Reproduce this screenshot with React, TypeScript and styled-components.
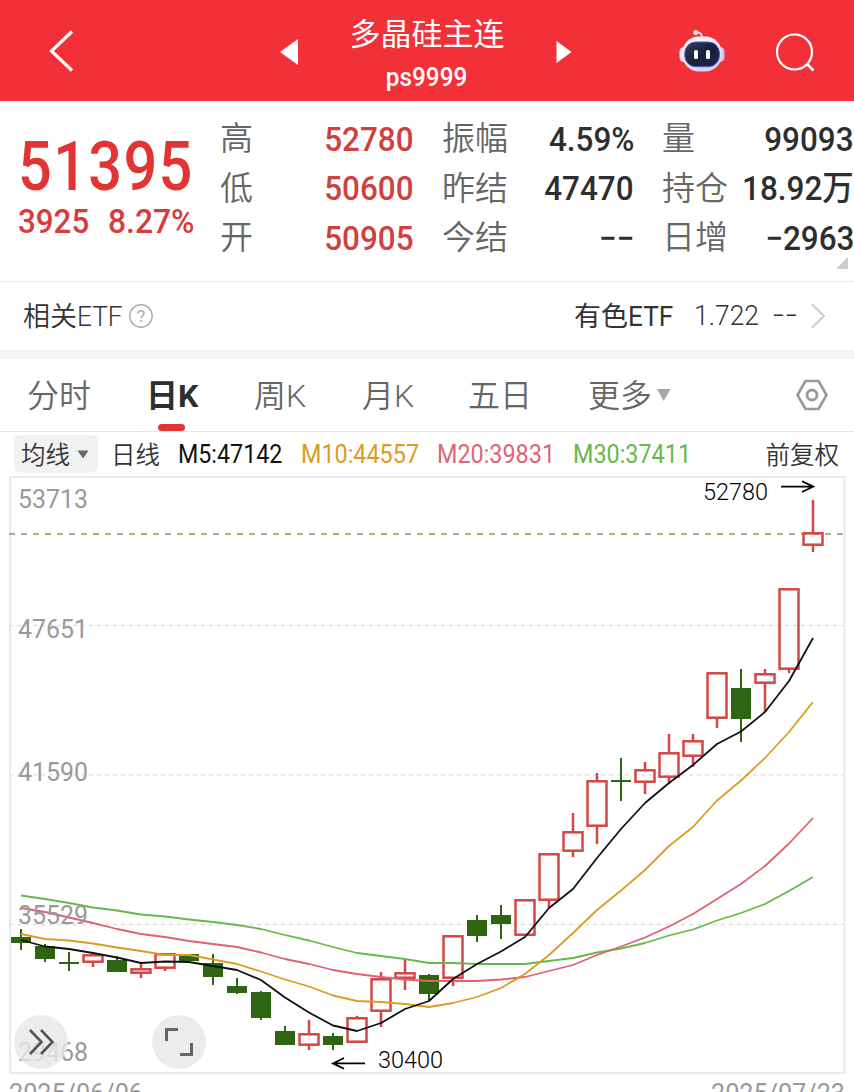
import React from "react";
import styled, { createGlobalStyle } from "styled-components";

const GlobalStyle = createGlobalStyle`
  * { box-sizing: border-box; }
  html, body { margin: 0; padding: 0; background: #fff; overflow: hidden; }
  body { font-family: Roboto, "Noto Sans CJK SC", sans-serif; color: #333; }
`;

const Screen = styled.main`
  width: 854px;
  height: 1092px;
  overflow: hidden;
  display: flex;
  flex-direction: column;
  background: #fff;
`;

/* Digits are set narrower than the family's default width. */
const Num = styled.span<{ $scale?: number; $origin?: string; $track?: number }>`
  display: inline-block;
  white-space: nowrap;
  letter-spacing: ${(p) => p.$track ?? 0}px;
  transform: scaleX(${(p) => p.$scale ?? 0.935});
  transform-origin: ${(p) => p.$origin ?? "left"} center;
`;

const Header = styled.header`
  height: 101px;
  flex: none;
  display: grid;
  grid-template-columns: 278px 401px 97px 78px;
  align-items: center;
  background: #f23038;
  color: #fff;
`;

const BackButton = styled.div`
  padding-left: 48px;
  line-height: 0;
`;

const TitleGroup = styled.div`
  width: 298px;
  display: grid;
  grid-template-columns: 22px 1fr 23px;
  align-items: center;
  padding: 3px 0 0 1px;
  svg { display: block; }
`;

const Titles = styled.div`
  display: flex;
  flex-direction: column;
  align-items: center;
  padding-top: 9px;
`;

const Title = styled.div`
  font-size: 31px;
  line-height: 42px;
  height: 42px;
  white-space: nowrap;
`;

const Code = styled.div`
  font-size: 26px;
  line-height: 42px;
  height: 44px;
  font-weight: 500;
`;

const IconSlot = styled.div<{ $top?: number }>`
  padding-top: ${(p) => p.$top ?? 0}px;
  line-height: 0;
`;

const Quote = styled.section`
  position: relative;
  height: 181px;
  flex: none;
  display: grid;
  grid-template-columns: 220px 194px 28px 192px 28px 192px;
  border-bottom: 1px solid #ebebeb;
`;

const Price = styled.div`
  padding: 29px 0 0 18px;
  color: #e33434;
`;

const Last = styled.div`
  font-size: 68px;
  line-height: 74px;
  height: 73px;
  font-weight: 500;
`;

const Change = styled.div`
  display: grid;
  grid-template-columns: 90px 1fr;
  font-size: 33.5px;
  line-height: 38px;
  font-weight: 500;
  color: #d63c3c;
`;

const Stats = styled.dl`
  margin: 0;
  padding-top: 13px;
  display: grid;
  grid-template-rows: repeat(3, 49.5px);
`;

const Stat = styled.div`
  display: flex;
  justify-content: space-between;
  align-items: center;
  white-space: nowrap;
`;

const StatLabel = styled.dt`
  font-size: 33px;
  line-height: 49px;
  color: #666;
  font-weight: 350;
`;

const StatValue = styled.dd<{ $up?: boolean }>`
  margin: 0;
  font-size: 34px;
  line-height: 50px;
  font-weight: 500;
  color: ${(p) => (p.$up ? "#cf4040" : "#2e2e2e")};
`;

const Corner = styled.svg`
  position: absolute;
  right: 6px;
  bottom: 12px;
`;

const Related = styled.section`
  height: 77px;
  flex: none;
  display: flex;
  align-items: center;
  padding: 0 28px 0 23px;
  border-bottom: 9px solid #f4f4f4;
  font-size: 27px;
  color: #333;
  white-space: nowrap;
  svg { display: block; flex: none; }
`;

const RelatedLabel = styled.div`
  width: 106px;
  padding-bottom: 3px;
  font-weight: 350;
`;

const RelatedName = styled.div`
  margin-left: auto;
  width: 120px;
  padding-bottom: 3px;
`;

const RelatedPrice = styled.div`
  width: 78px;
  font-weight: 350;
`;

const RelatedChange = styled.div`
  width: 38px;
  font-weight: 350;
`;

const Tabs = styled.nav`
  height: 73px;
  flex: none;
  display: grid;
  grid-template-columns: 119px 108px 108px 106px 120px 208px 1fr;
  padding-left: 27px;
  border-bottom: 1px solid #e6e6e6;
`;

const Tab = styled.div<{ $active?: boolean }>`
  position: relative;
  display: flex;
  align-items: center;
  padding-bottom: 4px;
  font-size: 32px;
  font-weight: ${(p) => (p.$active ? 700 : 350)};
  color: ${(p) => (p.$active ? "#2e2e2e" : "#666")};
  white-space: nowrap;
`;

const MoreArrow = styled.svg`
  margin: 3px 0 0 3px;
`;

const SettingsTab = styled(Tab)`
  padding-bottom: 0;
`;

const Underline = styled.span`
  position: absolute;
  left: 12px;
  bottom: 0;
  width: 27px;
  height: 7px;
  border-radius: 3.5px;
  background: #e33434;
`;

const Legend = styled.section`
  height: 44px;
  flex: none;
  display: grid;
  grid-template-columns: 84px 13px 67px 123px 136px 136px 1fr auto;
  align-items: center;
  padding: 0 15px 0 14px;
  font-size: 24.5px;
  font-weight: 350;
  white-space: nowrap;
`;

const LegendLabel = styled.span`
  padding-bottom: 2px;
`;

const Picker = styled.div`
  height: 38px;
  border-radius: 6px;
  background: #f2f2f2;
  display: flex;
  align-items: center;
  gap: 7px;
  padding-left: 7px;
`;

const Average = styled.div<{ $color: string }>`
  font-size: 25px;
  font-weight: 450;
  color: ${(p) => p.$color};
`;

const ChartArea = styled.section`
  position: relative;
  height: 616px;
  flex: none;
  svg { display: block; }
`;

const RoundButton = styled.div<{ $left: number }>`
  position: absolute;
  left: ${(p) => p.$left}px;
  top: 539px;
  width: 54px;
  height: 54px;
  border-radius: 50%;
  background: rgba(232, 232, 232, 0.82);
  display: flex;
  align-items: center;
  justify-content: center;
`;

type Row = { label: string; value: string; up?: boolean };

const columns: Row[][] = [
  [
    { label: "高", value: "52780", up: true },
    { label: "低", value: "50600", up: true },
    { label: "开", value: "50905", up: true },
  ],
  [
    { label: "振幅", value: "4.59%" },
    { label: "昨结", value: "47470" },
    { label: "今结", value: "−−" },
  ],
  [
    { label: "量", value: "99093" },
    { label: "持仓", value: "18.92万" },
    { label: "日增", value: "−2963" },
  ],
];

/* [kind, body top, body bottom, wick top, wick bottom] */
type Candle = ["u" | "d" | "x", number, number, number, number];
const candles: Candle[] = [
  ["d", 937, 943, 929, 950],
  ["d", 946, 959, 944, 962],
  ["x", 962, 964, 952, 971],
  ["u", 954, 963, 954, 967],
  ["d", 960, 972, 956, 972],
  ["u", 968, 974, 963, 978],
  ["u", 953, 969, 953, 971],
  ["d", 954, 961, 954, 963],
  ["d", 963, 977, 954, 985],
  ["d", 986, 993, 978, 994],
  ["d", 992, 1018, 991, 1020],
  ["d", 1031, 1045, 1026, 1045],
  ["u", 1033, 1046, 1020, 1050],
  ["d", 1036, 1045, 1033, 1050],
  ["u", 1017, 1043, 1016, 1043],
  ["u", 978, 1012, 972, 1027],
  ["u", 972, 979, 960, 990],
  ["d", 975, 994, 974, 1001],
  ["u", 935, 979, 935, 986],
  ["d", 920, 936, 915, 942],
  ["d", 915, 924, 905, 939],
  ["u", 899, 936, 899, 936],
  ["u", 853, 901, 853, 908],
  ["u", 831, 852, 813, 857],
  ["u", 780, 827, 773, 844],
  ["x", 780, 782, 758, 801],
  ["u", 769, 783, 762, 794],
  ["u", 752, 778, 734, 784],
  ["u", 740, 757, 734, 767],
  ["u", 672, 719, 672, 728],
  ["d", 688, 719, 669, 742],
  ["u", 673, 684, 669, 712],
  ["u", 588, 670, 588, 673],
  ["u", 532, 546, 500, 552],
];

const averages: { color: string; ys: number[] }[] = [
  { color: "#67b84b", ys: [895.5, 899, 903, 907.5, 910.5, 914.5, 916.5, 919.5, 922, 925, 929, 935, 940.5, 947, 953, 956, 959, 963, 963, 964, 964, 964, 961, 958, 952.5, 948.5, 943, 935.5, 929.5, 920.5, 913, 904, 891, 877] },
  { color: "#df6073", ys: [908, 912, 917.5, 923, 929, 934, 937, 941, 944, 947, 952.5, 959, 964, 970, 974, 977, 979.5, 981, 981, 981, 979.5, 977, 971, 965, 955, 946.5, 937.5, 926.5, 914, 899, 884, 866, 843.5, 818] },
  { color: "#dc9b22", ys: [934, 939, 940.5, 943.5, 947.5, 951, 955, 955, 959.5, 964, 971.5, 979.5, 986.5, 995.5, 1001, 1002, 1004, 1007, 1003, 997, 988, 974, 955, 933, 910, 890.5, 870, 846, 827, 800.5, 780.5, 758, 732, 702] },
  { color: "#111", ys: [940, 946.5, 949, 953, 957.5, 963, 961.5, 962, 966, 970, 980, 997.5, 1012.5, 1025.5, 1031, 1023, 1009, 1001, 979, 964, 951.5, 937, 908, 889, 858, 829, 803, 783, 765, 744, 731.5, 712, 681, 638] },
];

const xAt = (i: number) => 21 + i * 24;

function CandleMark({ candle, x }: { candle: Candle; x: number }) {
  const [kind, top, bottom, high, low] = candle;
  if (kind === "u") {
    return (
      <g stroke="#d44646" strokeWidth="2.5" fill="none">
        {high < top && <path d={`M${x} ${high}V${top + 1}`} />}
        {low > bottom && <path d={`M${x} ${bottom - 1}V${low}`} />}
        <rect x={x - 9.5} y={top + 1.3} width="19" height={bottom - top - 2.6} />
      </g>
    );
  }
  return (
    <g fill="#2f6413">
      <rect x={x - 1} y={high} width="2" height={low - high} />
      <rect x={x - 10} y={top} width="20" height={bottom - top} />
    </g>
  );
}

function AxisText({ x, y, width, children, color = "#999", weight = 450, size = 26 }: {
  x: number; y: number; width: number; children: string; color?: string; weight?: number; size?: number;
}) {
  return (
    <text x={x} y={y} textLength={width} lengthAdjust="spacingAndGlyphs" fontSize={size} fontWeight={weight} fill={color}>
      {children}
    </text>
  );
}

function Chart() {
  return (
    <svg width="854" height="616" viewBox="0 476 854 616">
      <rect x="10" y="477" width="834.5" height="596" fill="none" stroke="#e8e8e8" strokeWidth="1.8" />
      {[625.5, 774.8, 924.5].map((y) => (
        <path key={y} d={`M9 ${y}H844`} stroke="#dedede" strokeWidth="1.3" strokeDasharray="4 4" />
      ))}
      <path d="M9 534H844" stroke="#bda77e" strokeWidth="1.8" strokeDasharray="6 6" />
      {candles.map((c, i) => <CandleMark key={i} candle={c} x={xAt(i)} />)}
      {averages.map((a) => (
        <polyline
          key={a.color}
          points={a.ys.map((y, i) => `${xAt(i)},${y}`).join(" ")}
          fill="none"
          stroke={a.color}
          strokeWidth="1.8"
          strokeLinejoin="round"
        />
      ))}
      <AxisText x={18} y={508} width={70}>53713</AxisText>
      <AxisText x={18} y={638} width={70}>47651</AxisText>
      <AxisText x={18} y={781} width={70}>41590</AxisText>
      <AxisText x={18} y={924} width={70}>35529</AxisText>
      <AxisText x={18} y={1061} width={70}>29468</AxisText>
      <AxisText x={9} y={1102} width={134}>2025/06/06</AxisText>
      <AxisText x={711} y={1102} width={134}>2025/07/23</AxisText>
      <AxisText x={703} y={500} width={65} color="#000" weight={350} size={24.5}>52780</AxisText>
      <AxisText x={378} y={1068} width={65} color="#000" weight={350} size={24.5}>30400</AxisText>
      <g fill="none" stroke="#000" strokeWidth="1.8">
        <path d="M781 486.6H813M802 481.2L813.3 486.6L802 492" />
        <path d="M365 1063.4H333M344 1058L333 1063.4L344 1068.8" />
      </g>
    </svg>
  );
}

function Robot() {
  return (
    <svg width="46" height="42" viewBox="0 0 46 42">
      <defs>
        <linearGradient id="shell" x1="0" y1="0" x2="0.3" y2="1">
          <stop offset="0" stopColor="#fff" />
          <stop offset="0.6" stopColor="#ece4fb" />
          <stop offset="1" stopColor="#d8d2fa" />
        </linearGradient>
        <linearGradient id="visor" x1="0" y1="0" x2="1" y2="1">
          <stop offset="0" stopColor="#35405c" />
          <stop offset="0.5" stopColor="#17213c" />
          <stop offset="1" stopColor="#1c2750" />
        </linearGradient>
      </defs>
      <path d="M16.5 2.4C21.5 2 23 3.5 23 8" fill="none" stroke="#ffe3ea" strokeWidth="1.8" />
      <circle cx="16.8" cy="2.6" r="2.5" fill="#ffdfe7" />
      <rect x="0.5" y="17" width="9" height="15" rx="4.5" fill="#f3dff2" />
      <rect x="36.5" y="17" width="9" height="15" rx="4.5" fill="#c9c2f5" />
      <rect x="3" y="6.5" width="40" height="35" rx="17" fill="url(#shell)" />
      <rect x="5.8" y="12" width="34.6" height="24.7" rx="11" fill="url(#visor)" stroke="#5a58b8" strokeWidth="1" />
      <rect x="15" y="20" width="4" height="9" rx="1.5" fill="#fff" />
      <rect x="27" y="20" width="4" height="9" rx="1.5" fill="#fff" />
    </svg>
  );
}

export default function App() {
  return (
    <Screen>
      <GlobalStyle />
      <Header>
        <BackButton>
          <svg width="28" height="44" viewBox="0 0 28 44">
            <path d="M24 2.5L3.5 22L24 41.5" fill="none" stroke="#fff" strokeWidth="3.2" />
          </svg>
        </BackButton>
        <TitleGroup>
          <svg width="20" height="28" viewBox="0 0 20 28"><path d="M1 14L19 1V27Z" fill="#fff" /></svg>
          <Titles>
            <Title>多晶硅主连</Title>
            <Code><Num $scale={0.935} $origin="center">ps9999</Num></Code>
          </Titles>
          <svg width="20" height="28" viewBox="0 0 20 28"><path d="M3.5 3V25L18.5 14Z" fill="#fff" /></svg>
        </TitleGroup>
        <IconSlot $top={1}>
          <Robot />
        </IconSlot>
        <IconSlot $top={4}>
          <svg width="40" height="40" viewBox="0 0 40 40">
            <circle cx="18.5" cy="19" r="17.5" fill="none" stroke="#fff" strokeWidth="2.2" />
            <path d="M31 31L37.5 37.5" stroke="#fff" strokeWidth="2.6" />
          </svg>
        </IconSlot>
      </Header>

      <Quote>
        <Price>
          <Last><Num $scale={0.875} $track={1.5}>51395</Num></Last>
          <Change>
            <Num>3925</Num>
            <Num $scale={0.95}>8.27%</Num>
          </Change>
        </Price>
        {columns.map((rows, c) => (
          <React.Fragment key={c}>
            {c > 0 && <span />}
            <Stats>
              {rows.map((r) => (
                <Stat key={r.label}>
                  <StatLabel>{r.label}</StatLabel>
                  <StatValue $up={r.up}><Num $scale={0.925} $origin="right">{r.value}</Num></StatValue>
                </Stat>
              ))}
            </Stats>
          </React.Fragment>
        ))}
        <Corner width="12" height="12"><path d="M12 0V12H0Z" fill="#ccc" /></Corner>
      </Quote>

      <Related>
        <RelatedLabel>相关<Num $scale={0.97}>ETF</Num></RelatedLabel>
        <svg width="24" height="24" viewBox="0 0 24 24">
          <circle cx="12" cy="12" r="11.2" fill="none" stroke="#aaa" strokeWidth="1.4" />
          <path d="M9 9.5C9 5.8 15 5.8 15 9.4C15 11.8 12.1 11.7 12.1 14.3" fill="none" stroke="#aaa" strokeWidth="1.6" />
          <circle cx="12.1" cy="17" r="1.1" fill="#aaa" />
        </svg>
        <RelatedName>有色<Num $scale={0.97}>ETF</Num></RelatedName>
        <RelatedPrice><Num $scale={0.98}>1.722</Num></RelatedPrice>
        <RelatedChange><Num $scale={0.84}>−−</Num></RelatedChange>
        <svg width="16" height="26" viewBox="0 0 16 26">
          <path d="M2 1.5L14 13L2 24.5" fill="none" stroke="#ccc" strokeWidth="2" />
        </svg>
      </Related>

      <Tabs>
        <Tab>分时</Tab>
        <Tab $active>日K<Underline /></Tab>
        <Tab>周K</Tab>
        <Tab>月K</Tab>
        <Tab>五日</Tab>
        <Tab>
          更多
          <MoreArrow width="16" height="14" viewBox="0 0 16 14"><path d="M2 1H15.5L8.7 13Z" fill="#a6a6a6" /></MoreArrow>
        </Tab>
        <SettingsTab>
          <svg width="32" height="32" viewBox="0 0 32 32" fill="none" stroke="#999">
            <path d="M9.5 2H22.5L30.5 16L22.5 30H9.5L1.5 16Z" strokeWidth="2.6" strokeLinejoin="round" />
            <circle cx="16" cy="16" r="5" strokeWidth="2.8" />
          </svg>
        </SettingsTab>
      </Tabs>

      <Legend>
        <Picker>
          <LegendLabel>均线</LegendLabel>
          <svg width="12" height="9" viewBox="0 0 12 9"><path d="M0.5 0.5H11.5L6 8.5Z" fill="#666" /></svg>
        </Picker>
        <span />
        <LegendLabel>日线</LegendLabel>
        <Average $color="#111"><Num $scale={0.93}>M5:47142</Num></Average>
        <Average $color="#dc9b22"><Num $scale={0.935}>M10:44557</Num></Average>
        <Average $color="#e06377"><Num $scale={0.935}>M20:39831</Num></Average>
        <Average $color="#67b84b"><Num $scale={0.935}>M30:37411</Num></Average>
        <LegendLabel>前复权</LegendLabel>
      </Legend>

      <ChartArea>
        <Chart />
        <RoundButton $left={14}>
          <svg width="26" height="26" viewBox="0 0 26 26" fill="none" stroke="#555" strokeWidth="2.6">
            <path d="M2 1L13.5 13L2 25M13 1L24.5 13L13 25" />
          </svg>
        </RoundButton>
        <RoundButton $left={152}>
          <svg width="28" height="28" viewBox="0 0 28 28" fill="none" stroke="#666" strokeWidth="3">
            <path d="M1.5 13V1.5H13M26.5 15V26.5H15" />
          </svg>
        </RoundButton>
      </ChartArea>
    </Screen>
  );
}
